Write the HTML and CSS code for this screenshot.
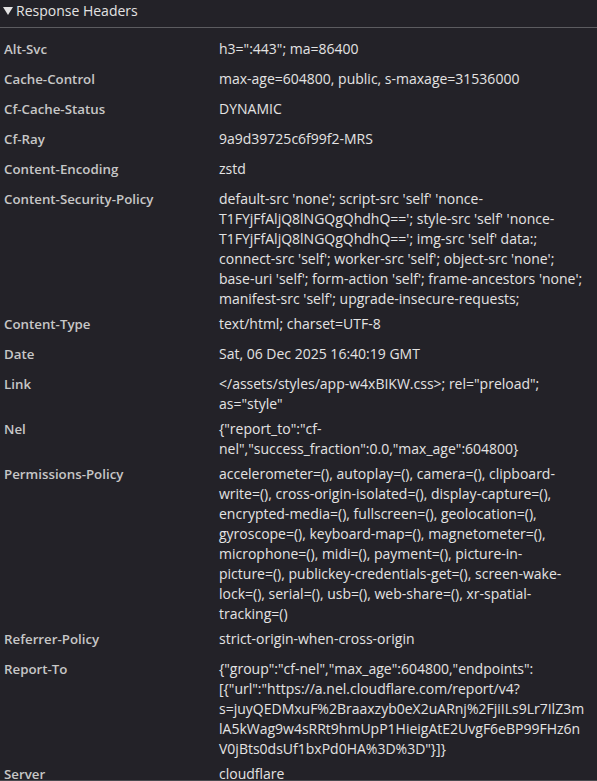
FILE: index.html
```html
<!DOCTYPE html>
<html>
<head>
<meta charset="utf-8">
<link rel="stylesheet" href="styles.css">
</head>
<body>
<div class="panel">
  <div class="section-title">
    <span class="tri"></span>
    <span>Response Headers</span>
  </div>
  <div class="rows">
    <div class="row"><div class="name">Alt-Svc</div><div class="value">h3=":443"; ma=86400</div></div>
    <div class="row"><div class="name">Cache-Control</div><div class="value">max-age=604800, public, s-maxage=31536000</div></div>
    <div class="row"><div class="name">Cf-Cache-Status</div><div class="value">DYNAMIC</div></div>
    <div class="row"><div class="name">Cf-Ray</div><div class="value">9a9d39725c6f99f2-MRS</div></div>
    <div class="row"><div class="name">Content-Encoding</div><div class="value">zstd</div></div>
    <div class="row"><div class="name">Content-Security-Policy</div><div class="value">default-src 'none'; script-src 'self' 'nonce-<br>T1FYjFfAljQ8lNGQgQhdhQ=='; style-src 'self' 'nonce-<br>T1FYjFfAljQ8lNGQgQhdhQ=='; img-src 'self' data:;<br>connect-src 'self'; worker-src 'self'; object-src 'none';<br>base-uri 'self'; form-action 'self'; frame-ancestors 'none';<br>manifest-src 'self'; upgrade-insecure-requests;</div></div>
    <div class="row"><div class="name">Content-Type</div><div class="value">text/html; charset=UTF-8</div></div>
    <div class="row"><div class="name">Date</div><div class="value">Sat, 06 Dec 2025 16:40:19 GMT</div></div>
    <div class="row"><div class="name">Link</div><div class="value">&lt;/assets/styles/app-w4xBIKW.css&gt;; rel="preload";<br>as="style"</div></div>
    <div class="row"><div class="name">Nel</div><div class="value">{"report_to":"cf-<br>nel","success_fraction":0.0,"max_age":604800}</div></div>
    <div class="row"><div class="name">Permissions-Policy</div><div class="value">accelerometer=(), autoplay=(), camera=(), clipboard-<br>write=(), cross-origin-isolated=(), display-capture=(),<br>encrypted-media=(), fullscreen=(), geolocation=(),<br>gyroscope=(), keyboard-map=(), magnetometer=(),<br>microphone=(), midi=(), payment=(), picture-in-<br>picture=(), publickey-credentials-get=(), screen-wake-<br>lock=(), serial=(), usb=(), web-share=(), xr-spatial-<br>tracking=()</div></div>
    <div class="row"><div class="name">Referrer-Policy</div><div class="value">strict-origin-when-cross-origin</div></div>
    <div class="row"><div class="name">Report-To</div><div class="value">{"group":"cf-nel","max_age":604800,"endpoints":<br>[{"url":"https://a.nel.cloudflare.com/report/v4?<br>s=juyQEDMxuF%2Braaxzyb0eX2uARnj%2FjiILs9Lr7IlZ3m<br>lA5kWag9w4sRRt9hmUpP1HieigAtE2UvgF6eBP99FHz6n<br>V0jBts0dsUf1bxPd0HA%3D%3D"}]}</div></div>
    <div class="row"><div class="name">Server</div><div class="value">cloudflare</div></div>
  </div>
</div>
<div class="edge"></div>
</body>
</html>
```

FILE: styles.css
```css
html, body {
  margin: 0;
  padding: 0;
  background: #232228;
}
body {
  width: 597px;
  height: 781px;
  overflow: hidden;
  font-family: "Open Sans", "Noto Sans", sans-serif;
  font-size: 14px;
  color: #e3e3e3;
}
.panel {
  display: flex;
  flex-direction: column;
}
.section-title {
  display: flex;
  align-items: flex-start;
  gap: 3px;
  height: 27px;
  box-sizing: border-box;
  padding: 1px 0 0 3px;
  line-height: 20px;
  border-bottom: 1px solid #5c5c60;
  font-size: 14px;
  color: #e3e3e3;
}
.section-title { height: 28px; }
.tri {
  width: 0;
  height: 0;
  border-left: 5px solid transparent;
  border-right: 5px solid transparent;
  border-top: 8px solid #e3e3e3;
  margin-top: 6px;
}
.rows {
  display: flex;
  flex-direction: column;
  padding-top: 6px;
}
.row {
  display: grid;
  grid-template-columns: 215px 1fr;
  box-sizing: border-box;
  min-height: 30px;
  padding: 5px 0 0 4px;
  line-height: 20px;
}
.name {
  font-weight: 600;
  font-size: 13.3px;
  color: #c7c7c7;
}
.value {
  white-space: nowrap;
  color: #e3e3e3;
}
.edge {
  position: fixed;
  left: 0;
  right: 0;
  bottom: 0;
  height: 1px;
  background: #4a4a4f;
}
```
